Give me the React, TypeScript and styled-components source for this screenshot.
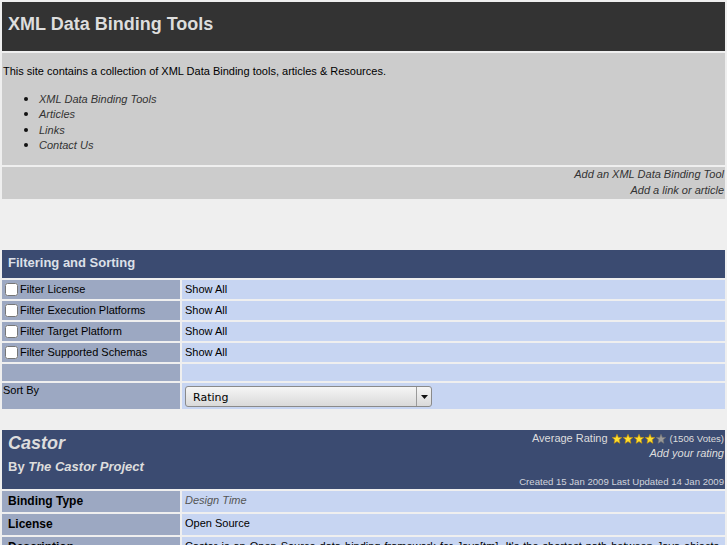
import React from "react";
import styled, { createGlobalStyle } from "styled-components";

const GlobalStyle = createGlobalStyle`
  body {
    margin: 0;
    background: #efefef;
    font-family: "Liberation Sans", Arial, sans-serif;
    font-size: 11px;
    color: #000;
  }
`;

const Layout = styled.div`
  display: grid;
  gap: 2px;
  padding: 2px;
`;

const Banner = styled.div`
  box-sizing: border-box;
  height: 49px;
  background: #333333;
  padding: 12px 6px 0;
`;

const Title = styled.h1`
  margin: 0;
  font-size: 18px;
  font-weight: bold;
  color: #dddddd;
`;

const Intro = styled.div`
  display: flow-root;
  background: #cccccc;
  padding: 0 1px 1.5px;
  line-height: 15.5px;
`;

const IntroText = styled.p`
  margin: 11px 0 0;
`;

const NavList = styled.ul`
  margin: 11px 0;
  padding-left: 36px;
`;

const NavItem = styled.li`
  height: 15.5px;
  font-style: italic;
  color: #333333;
  &::marker {
    font-size: 14px;
    color: #111;
  }
`;

const Actions = styled.div`
  background: #cccccc;
  text-align: right;
  padding: 0 1px 1px;
  line-height: 15.5px;
  font-style: italic;
  color: #333333;
`;

const Grid = styled.div<{ $top: number }>`
  display: grid;
  grid-template-columns: 178px 1fr;
  gap: 2px;
  padding: 2px;
  margin-top: ${({ $top }) => $top}px;
`;

const GridHead = styled.div`
  grid-column: 1 / -1;
  box-sizing: border-box;
  height: 28px;
  background: #3b4b71;
  color: #dde0e8;
  font-size: 13px;
  font-weight: bold;
  padding: 5px 6px 0;
`;

const Label = styled.div<{ $h: number; $bold?: boolean }>`
  box-sizing: border-box;
  height: ${({ $h }) => $h}px;
  background: #9ca8c2;
  display: flex;
  align-items: flex-start;
  padding: ${({ $bold }) => ($bold ? "3px 6px 0" : "0 1px")};
  line-height: 15px;
  font-weight: ${({ $bold }) => ($bold ? "bold" : "normal")};
  font-size: ${({ $bold }) => ($bold ? "12px" : "11px")};
  overflow: hidden;
`;

const FilterLabel = styled.label`
  display: flex;
  align-items: center;
  gap: 2px;
  height: 100%;
  padding-left: 2px;
`;

const Check = styled.input`
  margin: 0;
  width: 13px;
  height: 13px;
`;

const Value = styled.div<{ $h: number; $italic?: boolean; $justify?: boolean }>`
  box-sizing: border-box;
  height: ${({ $h }) => $h}px;
  background: #c7d5f2;
  padding: 2px 3px 0;
  line-height: 15px;
  font-style: ${({ $italic }) => ($italic ? "italic" : "normal")};
  color: ${({ $italic }) => ($italic ? "#555555" : "#000")};
  text-align: ${({ $justify }) => ($justify ? "justify" : "left")};
  overflow: hidden;
`;

const SelectBox = styled.div`
  display: flex;
  box-sizing: border-box;
  width: 247px;
  height: 21px;
  margin-top: 1px;
  border: 1px solid #8a8a8a;
  border-radius: 3px;
  background: linear-gradient(#f6f6f6, #d9d9d9);
  font-family: "DejaVu Sans", sans-serif;
  font-size: 11px;
  color: #000;
`;

const SelectText = styled.div`
  flex: 1;
  padding: 3px 7px 0;
`;

const SelectArrow = styled.div`
  width: 14px;
  border-left: 1px solid #9a9a9a;
  display: flex;
  align-items: center;
  justify-content: center;
`;

const ItemHead = styled.div`
  grid-column: 1 / -1;
  box-sizing: border-box;
  height: 59px;
  background: #3b4b71;
  color: #dddddd;
  display: flex;
  justify-content: space-between;
`;

const ItemTitle = styled.div`
  padding: 3px 6px 0;
`;

const ItemName = styled.h2`
  margin: 0;
  font-size: 18px;
  font-style: italic;
  font-weight: bold;
  line-height: 21px;
`;

const ItemBy = styled.div`
  margin-top: 5px;
  font-size: 13px;
  font-weight: bold;
  line-height: 16px;
  em {
    font-style: italic;
  }
`;

const ItemMeta = styled.div`
  display: flex;
  flex-direction: column;
  align-items: flex-end;
  padding: 1px 1px 0;
  line-height: 15px;
`;

const Rating = styled.div`
  display: flex;
  align-items: center;
  gap: 4px;
`;

const Stars = styled.span`
  display: inline-flex;
  gap: 1px;
`;

const Votes = styled.span`
  font-size: 9.6px;
`;

const RateLink = styled.div`
  font-style: italic;
`;

const Dates = styled.div`
  margin-top: auto;
  font-size: 9.6px;
  color: #d0d3dc;
`;

const Star = ({ on }: { on: boolean }) => (
  <svg width="10" height="10" viewBox="0 0 10 10">
    <polygon
      points="5,0.3 6.3,3.4 9.7,3.6 7.1,5.8 7.9,9.3 5,7.5 2.1,9.3 2.9,5.8 0.3,3.6 3.7,3.4"
      fill={on ? "#ffe030" : "#9a9a9a"}
      stroke={on ? "#c89a10" : "#777"}
      strokeWidth="0.7"
    />
  </svg>
);

const filters = [
  "Filter License",
  "Filter Execution Platforms",
  "Filter Target Platform",
  "Filter Supported Schemas",
];

const App = () => {
  return (
    <>
      <GlobalStyle />
      <Layout>
        <Banner>
          <Title>XML Data Binding Tools</Title>
        </Banner>
        <Intro>
          <IntroText>
            This site contains a collection of XML Data Binding tools, articles &amp; Resources.
          </IntroText>
          <NavList>
            <NavItem>XML Data Binding Tools</NavItem>
            <NavItem>Articles</NavItem>
            <NavItem>Links</NavItem>
            <NavItem>Contact Us</NavItem>
          </NavList>
        </Intro>
        <Actions>
          <div>Add an XML Data Binding Tool</div>
          <div>Add a link or article</div>
        </Actions>
      </Layout>

      <Grid $top={47}>
        <GridHead>Filtering and Sorting</GridHead>
        {filters.map((f) => (
          <React.Fragment key={f}>
            <Label $h={19}>
              <FilterLabel>
                <Check type="checkbox" />
                {f}
              </FilterLabel>
            </Label>
            <Value $h={19}>Show All</Value>
          </React.Fragment>
        ))}
        <Label $h={17} />
        <Value $h={17} />
        <Label $h={26}>Sort By</Label>
        <Value $h={26}>
          <SelectBox>
            <SelectText>Rating</SelectText>
            <SelectArrow>
              <svg width="7" height="4" viewBox="0 0 7 4">
                <polygon points="0,0 7,0 3.5,4" fill="#111" />
              </svg>
            </SelectArrow>
          </SelectBox>
        </Value>
      </Grid>

      <Grid $top={17}>
        <ItemHead>
          <ItemTitle>
            <ItemName>Castor</ItemName>
            <ItemBy>
              By <em>The Castor Project</em>
            </ItemBy>
          </ItemTitle>
          <ItemMeta>
            <Rating>
              Average Rating
              <Stars>
                {[1, 2, 3, 4, 5].map((n) => (
                  <Star key={n} on={n <= 4} />
                ))}
              </Stars>
              <Votes>(1506 Votes)</Votes>
            </Rating>
            <RateLink>Add your rating</RateLink>
            <Dates>Created 15 Jan 2009 Last Updated 14 Jan 2009</Dates>
          </ItemMeta>
        </ItemHead>
        <Label $h={21} $bold>
          Binding Type
        </Label>
        <Value $h={21} $italic>
          Design Time
        </Value>
        <Label $h={21} $bold>
          License
        </Label>
        <Value $h={21}>Open Source</Value>
        <Label $h={60} $bold>
          Description
        </Label>
        <Value $h={60} $justify>
          Castor is an Open Source data binding framework for Java[tm]. It's the shortest path
          between Java objects, XML documents and relational tables. Castor provides Java-to-XML
          binding, Java-to-SQL persistence, and more.
        </Value>
      </Grid>
    </>
  );
};

export default App;
